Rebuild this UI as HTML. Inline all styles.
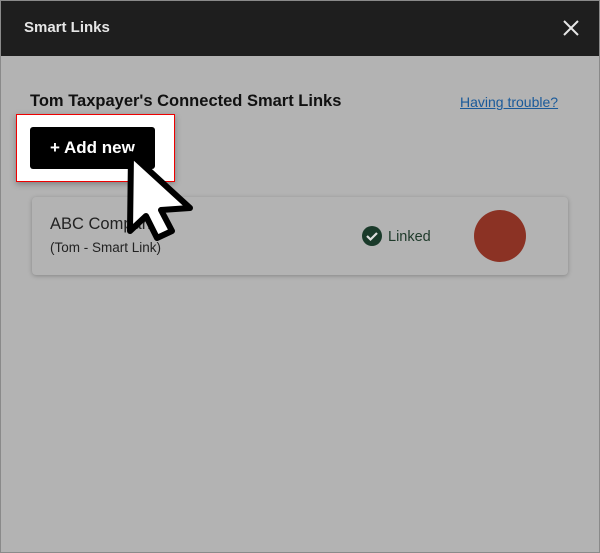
<!DOCTYPE html>
<html><head><style>
*{margin:0;padding:0;box-sizing:border-box}
body{width:600px;height:553px;background:#b3b3b3;font-family:"Liberation Sans",sans-serif;position:relative;overflow:hidden}
.frame{position:absolute;left:0;top:0;width:600px;height:553px;border:1px solid #8a8a8a;pointer-events:none}
.hdr{position:absolute;left:0;top:0;width:600px;height:56px;background:#1e1e1e;color:#e6e6e6}
.hdr .t{position:absolute;left:24px;top:19px;font-size:15px;font-weight:bold}
.hdr .x{position:absolute;left:562px;top:19px}
.title{position:absolute;left:30px;top:92px;font-size:16.5px;font-weight:bold;color:#111}
.link{position:absolute;left:460px;top:94px;font-size:14px;color:#1a5a9a;text-decoration:underline}
.hl{position:absolute;left:16px;top:114px;width:159px;height:68px;background:#fff;border:1px solid #e00;box-shadow:0 2px 6px rgba(0,0,0,.3)}
.btn{position:absolute;left:30px;top:127px;width:125px;height:42px;background:#000;border-radius:3px;color:#fff;font-weight:bold;font-size:17px;line-height:42px;padding-left:20px}
.card{position:absolute;left:32px;top:197px;width:536px;height:78px;background:#b3b3b3;border-radius:4px;box-shadow:0 1px 4px rgba(0,0,0,.25)}
.name{position:absolute;left:18px;top:18px;font-size:16.5px;color:#222}
.sub{position:absolute;left:18px;top:43px;font-size:13.5px;color:#222}
.lk{position:absolute;left:330px;top:29px;font-size:14.5px;color:#1e3a2a}
.dot{position:absolute;left:442px;top:13px;width:52px;height:52px;border-radius:50%;background:#8b3224}
</style></head><body>
<div class="hdr"><div class="t">Smart Links</div>
<svg class="x" width="18" height="18" viewBox="0 0 18 18"><path d="M2 2L16 16M16 2L2 16" stroke="#e6e6e6" stroke-width="2"/></svg></div>
<div class="title">Tom Taxpayer's Connected Smart Links</div>
<div class="link">Having trouble?</div>
<div class="hl"></div>
<div class="btn">+ Add new</div>
<div class="card">
<div class="name">ABC Company</div>
<div class="sub">(Tom - Smart Link)</div>
<div class="lk"><svg width="20" height="20" viewBox="0 0 20 20" style="vertical-align:-5px;margin-right:6px"><circle cx="10" cy="10" r="10" fill="#1a3a2a"/><path d="M5 10l3.5 3.5L15 7" stroke="#ddd" stroke-width="2.2" fill="none"/></svg>Linked</div>
<div class="dot"></div>
</div>
<svg style="position:absolute;left:0;top:0" width="600" height="553"><path d="M131 154L130 231L146 216L157 238L172 231L161 210L190 208Z" fill="#fff" stroke="#000" stroke-width="6" stroke-linejoin="round"/></svg>
<div class="frame"></div>
</body></html>
